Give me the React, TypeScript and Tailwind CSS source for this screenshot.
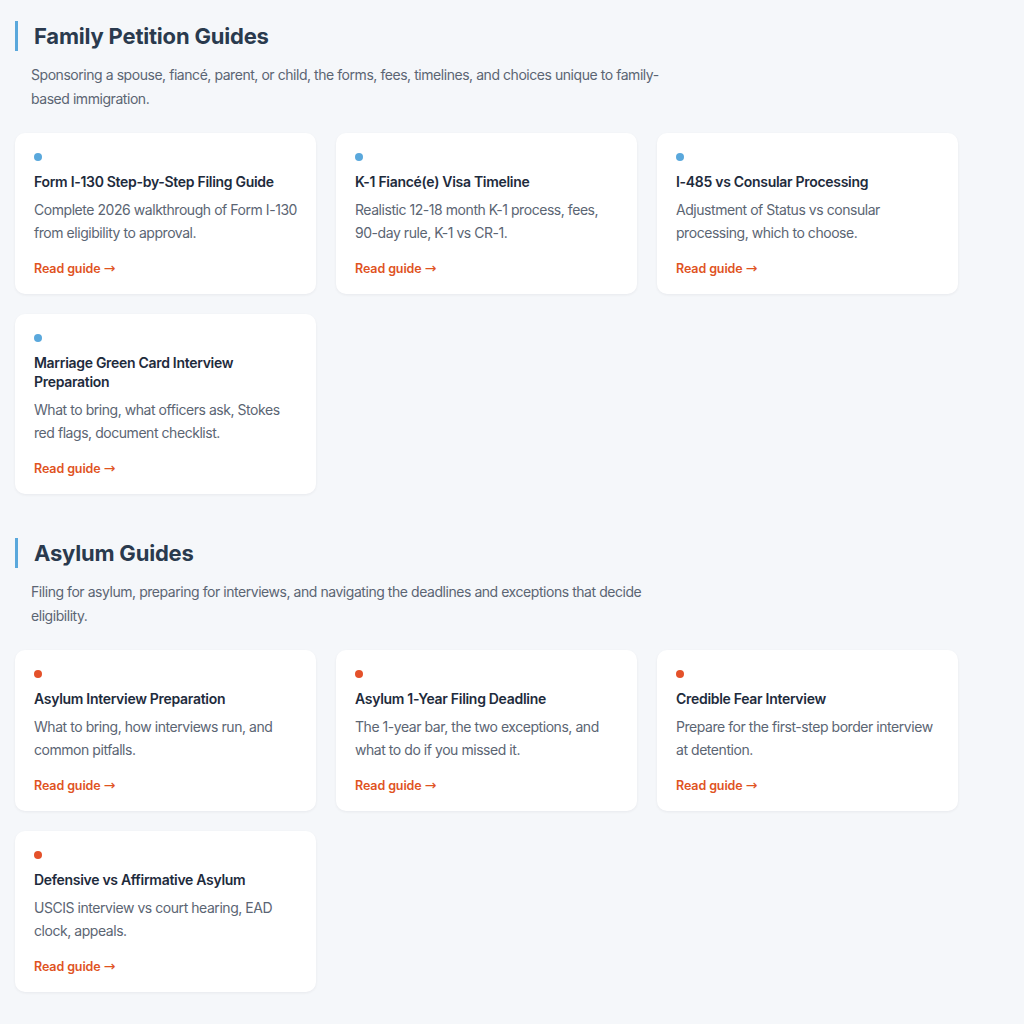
import React from "react";

type Guide = { title: string; desc: string };

const family: Guide[] = [
  { title: "Form I-130 Step-by-Step Filing Guide", desc: "Complete 2026 walkthrough of Form I-130 from eligibility to approval." },
  { title: "K-1 Fiancé(e) Visa Timeline", desc: "Realistic 12-18 month K-1 process, fees, 90-day rule, K-1 vs CR-1." },
  { title: "I-485 vs Consular Processing", desc: "Adjustment of Status vs consular processing, which to choose." },
  { title: "Marriage Green Card Interview Preparation", desc: "What to bring, what officers ask, Stokes red flags, document checklist." },
];

const asylum: Guide[] = [
  { title: "Asylum Interview Preparation", desc: "What to bring, how interviews run, and common pitfalls." },
  { title: "Asylum 1-Year Filing Deadline", desc: "The 1-year bar, the two exceptions, and what to do if you missed it." },
  { title: "Credible Fear Interview", desc: "Prepare for the first-step border interview at detention." },
  { title: "Defensive vs Affirmative Asylum", desc: "USCIS interview vs court hearing, EAD clock, appeals." },
];

function Card({ g, orange }: { g: Guide; orange: boolean }) {
  return (
    <div className="bg-white rounded-[10px] shadow-[0_1px_3px_rgba(15,23,42,0.06)] px-[19px] pt-5 pb-4 flex flex-col">
      <span className={orange ? "block w-2 h-2 rounded-full bg-[#e4512a] mb-3" : "block w-2 h-2 rounded-full bg-[#5aa8dc] mb-3"} />
      <h3 className="text-[14px] leading-[18.5px] font-semibold text-[#1e2b3c] tracking-[-0.3px] mb-[6.5px]">{g.title}</h3>
      <p className="text-[14px] leading-[23px] text-[#5b6573] tracking-[-0.45px]">{g.desc}</p>
      <a className="mt-[15px] text-[12.5px] leading-[18px] font-semibold text-[#e0531f] tracking-[-0.1px]">
        Read guide <span style={{ fontFamily: "'DejaVu Sans', sans-serif" }} className="text-[14px] leading-[18px] font-normal">→</span>
      </a>
    </div>
  );
}

function Section({ title, desc, items, orange }: { title: string; desc: string; items: Guide[]; orange: boolean }) {
  return (
    <section>
      <h2 className="border-l-[3px] border-[#5aa8dc] pl-4 text-[22px] leading-[30px] font-bold text-[#2a3a4e] tracking-[-0.2px]">{title}</h2>
      <p className="mt-3 pl-4 max-w-[656px] text-[14px] leading-[24px] text-[#5b6573] tracking-[-0.45px]">{desc}</p>
      <div className="mt-[22px] grid grid-cols-3 gap-5 w-[943px]">
        {items.map((g) => (
          <Card key={g.title} g={g} orange={orange} />
        ))}
      </div>
    </section>
  );
}

export default function App() {
  return (
    <div className="min-h-screen bg-[#f5f7fa] pl-[15px] pt-[21px] pb-8" style={{ fontFamily: "Inter, 'Noto Sans', sans-serif" }}>
      <div className="flex flex-col gap-[44px]">
        <Section
          title="Family Petition Guides"
          desc="Sponsoring a spouse, fiancé, parent, or child, the forms, fees, timelines, and choices unique to family-based immigration."
          items={family}
          orange={false}
        />
        <Section
          title="Asylum Guides"
          desc="Filing for asylum, preparing for interviews, and navigating the deadlines and exceptions that decide eligibility."
          items={asylum}
          orange={true}
        />
      </div>
    </div>
  );
}
